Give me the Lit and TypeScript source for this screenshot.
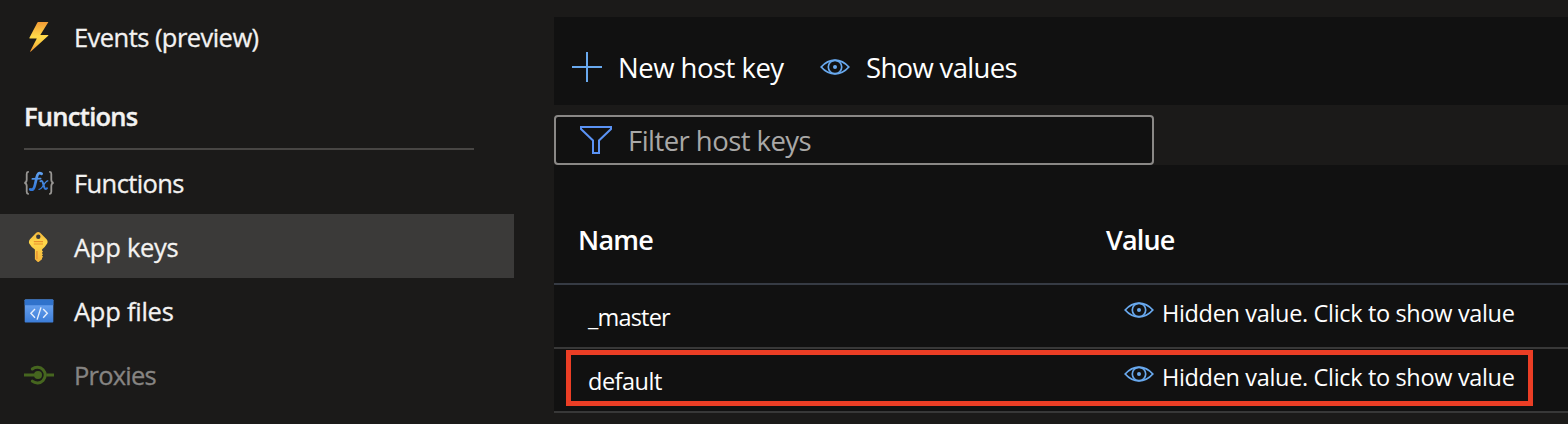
import { LitElement, html, css, svg } from "lit";
import { customElement } from "lit/decorators.js";

const bolt = svg`<svg width="30" height="30" viewBox="0 0 30 30">
  <defs><linearGradient id="b" x1="0" y1="0" x2="0" y2="1">
    <stop offset="0" stop-color="#f19a35"/><stop offset=".5" stop-color="#ffdb4a"/><stop offset=".7" stop-color="#fbc840"/><stop offset="1" stop-color="#ef9332"/>
  </linearGradient></defs>
  <path fill="url(#b)" d="M14.2 0H24.4L16.3 13H24.2Q24.6 13.3 24.2 13.8L6.6 29.7Q6 30 6.2 29.3L12.8 16.5H5.8Q5.2 16.3 5.4 15.8L13.4.5Q13.7 0 14.2 0Z"/></svg>`;

const fx = svg`<svg width="30" height="30" viewBox="0 0 30 30">
  <defs><linearGradient id="f" gradientUnits="userSpaceOnUse" x1="0" y1="4" x2="0" y2="23">
    <stop offset="0" stop-color="#62a3f2"/><stop offset="1" stop-color="#2f74d6"/>
  </linearGradient></defs>
  <g fill="none" stroke="#999794" stroke-width="1.8">
    <path d="M4.8 3.9H4.2Q2.7 4.1 2.7 5.9V11.8Q2.7 14.6.4 14.9Q2.7 15.2 2.7 18V23.8Q2.7 25.6 4.2 25.8H4.8"/>
    <path d="M25.2 3.9H25.8Q27.3 4.1 27.3 5.9V11.8Q27.3 14.6 29.6 14.9Q27.3 15.2 27.3 18V23.8Q27.3 25.6 25.8 25.8H25.2"/>
  </g>
  <g fill="none" stroke="url(#f)" stroke-linecap="round">
    <path stroke-width="2.7" d="M17.6 5.8C14.6 4.2 13.4 6.2 12.7 9.4L11 16.8C10.2 20.6 8.8 22.6 6.2 21.4"/>
    <path stroke-width="1.8" d="M8.4 10.9L16.6 10.7"/>
    <path stroke-width="1.9" d="M16.4 13.2Q18 12.2 18.8 14.6L20.3 19.4Q21.1 22 23 20.2"/>
    <path stroke-width="1.3" d="M23.8 12.9Q22.2 13 19.6 17Q17 21.4 15 21.3"/>
  </g></svg>`;

const keyIcon = svg`<svg width="30" height="30" viewBox="0 0 30 30">
  <defs><linearGradient id="k" x1="0" y1="0" x2="0" y2="1">
    <stop offset="0" stop-color="#f2b63c"/><stop offset=".35" stop-color="#ffd84a"/><stop offset="1" stop-color="#f5b53c"/>
  </linearGradient></defs>
  <path fill="url(#k)" fill-rule="evenodd" d="M12.2.7Q14.2-.5 16.2.7L22.6 7.2Q24.4 9.4 23 11.8Q21.2 15 18.2 17.2L18 18.6L19 19.6L17.9 21L19 22.3L17.9 23.4L19 24.6L18 26.2V27.2L14.9 29.8Q14.2 30.3 13.5 29.8L10.9 27.2V17.4Q7 15 5.4 11.8Q4.2 9.4 6 7.2ZM14.3 2.6A2.2 2.2 0 1 0 14.3 7A2.2 2.2 0 1 0 14.3 2.6Z"/>
  <path stroke="#e98f2c" stroke-width="1.1" d="M9.8 9.6H19M9.8 12H19"/><path stroke="#ea9a34" stroke-width="1.6" d="M12.9 19V27"/></svg>`;

const codeIcon = svg`<svg width="30" height="30" viewBox="0 0 30 30">
  <defs><linearGradient id="c" x1="0" y1="0" x2="0" y2="1">
    <stop offset="0" stop-color="#72a9f3"/><stop offset="1" stop-color="#3c7dd8"/>
  </linearGradient></defs>
  <rect x=".7" y="3.4" width="28.6" height="23.2" rx=".8" fill="url(#c)"/>
  <path d="M.7 9.3V4.2Q.7 3.4 1.5 3.4H28.5Q29.3 3.4 29.3 4.2V9.3Z" fill="#3072cb"/>
  <path fill="none" stroke="#e6eefb" stroke-width="1.4" d="M11 13L6.9 17.3L11 21.7M19.2 13L23.3 17.3L19.2 21.7M17 11.4L13.1 23.6"/></svg>`;

const proxyIcon = svg`<svg width="30" height="30" viewBox="0 0 30 30">
  <g fill="none" stroke="#46661f" stroke-width="3"><path d="M0 15.1H12M22.3 15.1H30"/>
  <path stroke-linecap="round" d="M8.3 9A7.9 7.9 0 1 1 8.3 21.2"/></g>
  <circle cx="14" cy="15.1" r="4" fill="#46661f"/></svg>`;

const eye = svg`<svg width="30" height="18" viewBox="0 0 30 18">
  <g fill="none" stroke="#69a9ee"><path stroke-width="1.8" d="M1.2 9Q7.2 2.1 15 2.1T28.8 9Q22.8 15.9 15 15.9T1.2 9Z"/>
  <circle cx="15" cy="9" r="6.7" stroke-width="1.7"/></g><circle cx="15" cy="9" r="2" fill="#69a9ee"/></svg>`;

const plus = svg`<svg width="30" height="30" viewBox="0 0 30 30"><path stroke="#69a9ee" stroke-width="2" d="M15 0V30M0 15H30"/></svg>`;

const funnel = svg`<svg width="32" height="28" viewBox="0 0 32 28"><path fill="none" stroke="#5b93f5" stroke-width="2" d="M1 1H31V3L19 14.5V27H13V14.5L1 3Z"/></svg>`;

@customElement("app-root")
export class AppRoot extends LitElement {
  static styles = css`
    :host { display: flex; width: 1568px; height: 424px; overflow: hidden; background: #1b1a19; color: #f3f2f1; font-family: "Open Sans", "Noto Sans", sans-serif; box-sizing: border-box; }
    svg { display: block; flex: none; }
    span { white-space: nowrap; }
    .side { width: 514px; flex: none; padding-top: 4px; box-sizing: border-box; }
    .item { height: 64px; display: flex; align-items: center; padding-left: 24px; gap: 20px; font-size: 25.5px; line-height: 36px; }
    .item span { padding-top: 2px; -webkit-text-stroke: .3px; }
    .item svg { margin-top: 2px; }
    .on { background: #3b3a39; }
    .off span { color: #868482; }
    .group { margin: 0 40px 0 24px; height: 82px; padding-top: 30px; box-sizing: border-box; border-bottom: 2px solid #484644; font-size: 25.5px; font-weight: 600; line-height: 36px; -webkit-text-stroke: .4px; }
    .main { flex: 1; margin-left: 40px; padding-top: 17px; display: flex; flex-direction: column; }
    .bar { height: 88px; background: #111; display: flex; align-items: center; padding: 12px 0 0 18px; box-sizing: border-box; font-size: 27.5px; line-height: 38px; color: #fff; }
    .bar span { margin: 2px 0 0 16px; }
    .bar .nh { width: 166px; margin-right: 36px; }
    .filter { margin-top: 10px; width: 600px; height: 50px; box-sizing: border-box; border: 2px solid #8a8886; border-radius: 4px; background: #111; display: flex; align-items: center; padding-left: 24px; gap: 16px; font-size: 27.5px; line-height: 38px; color: #a9a8a7; }
    .filter span { padding-top: 1px; }
    .grid { background: #111; color: #fff; }
    .row { display: grid; grid-template-columns: 528px 1fr; height: 64px; box-sizing: border-box; border-bottom: 2px solid #383838; padding-left: 24px; font-size: 23.5px; line-height: 32px; }
    .head { height: 120px; border-color: #363b44; font-size: 27px; font-weight: 600; line-height: 38px; padding-top: 56px; }
    .name { padding: 16px 0 0 10px; }
    .val { display: flex; align-items: flex-start; padding: 12px 0 0 18px; gap: 8px; }
    .val svg { margin-top: 4px; }
    .mark { position: absolute; left: 566px; top: 350px; width: 967px; height: 56px; box-sizing: border-box; border: 5px solid #eb3e25; }
    .events { letter-spacing: -.55px; }
    .gt { letter-spacing: -.72px; }
    .fn { letter-spacing: -.6px; }
    .ak, .af { letter-spacing: -.26px; }
    .px { letter-spacing: -.8px; }
    .nh { letter-spacing: -.51px; }
    .sv { letter-spacing: -.67px; }
    .fl { letter-spacing: -.55px; }
    .hn { letter-spacing: -.75px; }
    .hv { letter-spacing: -.85px; }
    ._master { letter-spacing: -.8px; }
    .default { letter-spacing: -.5px; }
    .hidden { letter-spacing: -.34px; }
  `;

  render() {
    const row = (name: string) => html`<div class="row"><span class="name ${name}">${name}</span>
      <div class="val">${eye}<span class="hidden">Hidden value. Click to show value</span></div></div>`;
    return html`
      <div class="side">
        <div class="item">${bolt}<span class="events">Events (preview)</span></div>
        <div class="group"><span class="gt">Functions</span></div>
        <div class="item">${fx}<span class="fn">Functions</span></div>
        <div class="item on">${keyIcon}<span class="ak">App keys</span></div>
        <div class="item">${codeIcon}<span class="af">App files</span></div>
        <div class="item off">${proxyIcon}<span class="px">Proxies</span></div>
      </div>
      <div class="main">
        <div class="bar">${plus}<span class="nh">New host key</span>${eye}<span class="sv">Show values</span></div>
        <div class="filter">${funnel}<span class="fl">Filter host keys</span></div>
        <div class="grid">
          <div class="row head"><span class="hn">Name</span><span class="hv">Value</span></div>
          ${row("_master")}${row("default")}
        </div>
      </div>
      <div class="mark"></div>`;
  }
}
